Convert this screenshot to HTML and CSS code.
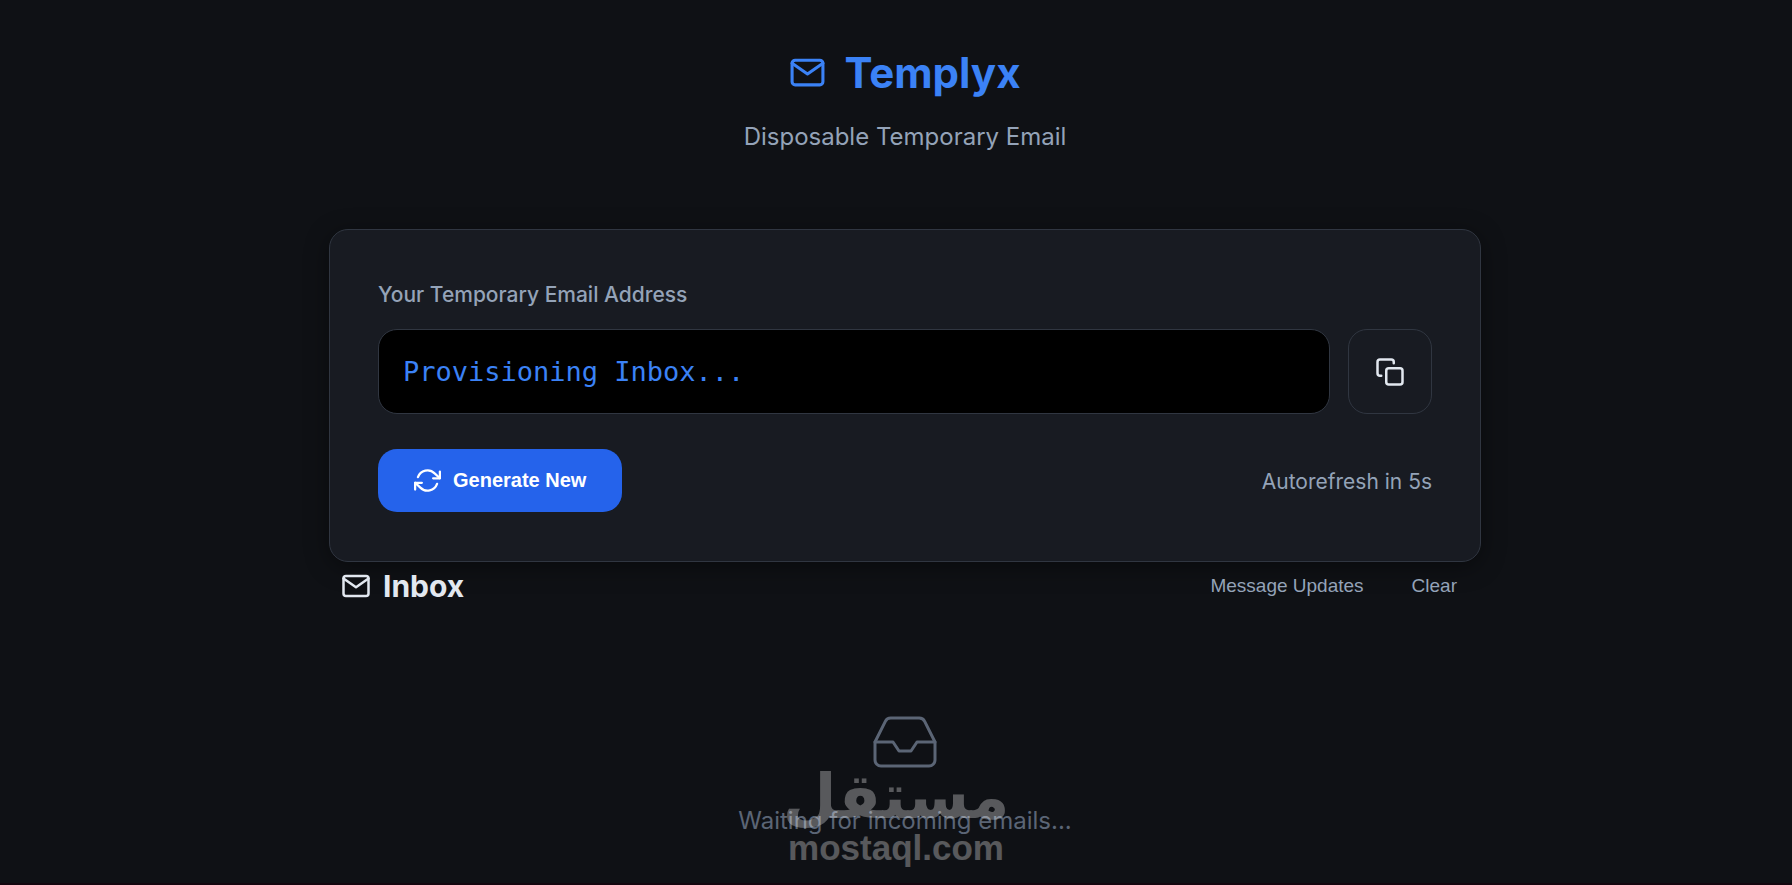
FILE: index.html
```html
<!DOCTYPE html>
<html lang="en">
<head>
<meta charset="utf-8">
<title>Templyx</title>
<link rel="stylesheet" href="styles.css">
</head>
<body>
<main class="page">
  <header class="brand">
    <h1 class="brand-name">
      <svg class="icon brand-icon" viewBox="0 0 24 24" aria-hidden="true"><rect x="2" y="4" width="20" height="16" rx="2"/><path d="M22 6l-10 7L2 6"/></svg>
      <span>Templyx</span>
    </h1>
    <p class="tagline">Disposable Temporary Email</p>
  </header>

  <section class="card">
    <label class="label" for="address">Your Temporary Email Address</label>
    <div class="address-row">
      <input class="address" id="address" type="text" value="Provisioning Inbox..." readonly>
      <button class="copy" type="button" aria-label="Copy address">
        <svg class="icon copy-icon" viewBox="0 0 24 24" aria-hidden="true"><rect x="9" y="9" width="13" height="13" rx="2"/><path d="M5 15H4a2 2 0 0 1-2-2V4a2 2 0 0 1 2-2h9a2 2 0 0 1 2 2v1"/></svg>
      </button>
    </div>
    <div class="actions">
      <button class="generate" type="button">
        <svg class="icon refresh-icon" viewBox="0 0 24 24" aria-hidden="true"><path d="M23 4v6h-6M1 20v-6h6"/><path d="M3.51 9a9 9 0 0 1 14.85-3.36L23 10M1 14l4.64 4.36A9 9 0 0 0 20.49 15"/></svg>
        <span>Generate New</span>
      </button>
      <span class="timer">Autorefresh in 5s</span>
    </div>
  </section>

  <section class="inbox">
    <div class="inbox-head">
      <h2 class="inbox-title">
        <svg class="icon inbox-icon" viewBox="0 0 24 24" aria-hidden="true"><rect x="2" y="4" width="20" height="16" rx="2"/><path d="M22 6l-10 7L2 6"/></svg>
        <span>Inbox</span>
      </h2>
      <div class="inbox-actions">
        <button class="text-button" type="button">Message Updates</button>
        <button class="text-button" type="button">Clear</button>
      </div>
    </div>
    <div class="empty">
      <svg class="icon empty-icon" viewBox="0 0 24 24" aria-hidden="true"><path d="M22 12h-6l-2 3h-4l-2-3H2"/><path d="M5.45 5.11L2 12v6a2 2 0 0 0 2 2h16a2 2 0 0 0 2-2v-6l-3.45-6.89A2 2 0 0 0 16.76 4H7.24a2 2 0 0 0-1.79 1.11z"/></svg>
      <p class="empty-text">Waiting for incoming emails...</p>
    </div>
  </section>
</main>
<div class="watermark">
  <span class="watermark-word" lang="ar" dir="rtl">مستقل</span>
  <span class="watermark-site">mostaql.com</span>
</div>
</body>
</html>
```

FILE: styles.css
```css
* {
  box-sizing: border-box;
}

body {
  margin: 0;
  min-height: 100vh;
  overflow: hidden;
  position: relative;
  background: #0f1115;
  color: #e2e8f0;
  font-family: Inter, "Liberation Sans", sans-serif;
  border-bottom: 2px solid #14060f;
}

h1, h2, p {
  margin: 0;
}

.page {
  max-width: 1170px;
  margin: 0 auto;
  padding: 43px 0 0 18px;
}

.icon {
  display: block;
  flex: none;
  fill: none;
  stroke: currentColor;
  stroke-width: 2;
  stroke-linecap: round;
  stroke-linejoin: round;
}

.brand {
  display: flex;
  flex-direction: column;
  align-items: center;
  gap: 18px;
  margin-bottom: 75px;
}

.brand-name {
  display: flex;
  align-items: center;
  gap: 18px;
  color: #3b82f6;
  font-size: 42px;
  line-height: 59px;
  font-weight: 700;
}

.brand-icon {
  width: 37px;
  height: 37px;
}

.tagline {
  color: #94a3b8;
  font-size: 24px;
  line-height: 34px;
}

.card {
  padding: 48px 48px 46px;
  border: 1px solid #303641;
  border-radius: 19px;
  background: #181b22;
  box-shadow: 0 5px 24px rgba(0, 0, 0, 0.4);
}

.label {
  display: block;
  margin-bottom: 17px;
  color: #94a3b8;
  font-size: 21px;
  line-height: 34px;
  font-weight: 500;
}

.address-row {
  display: flex;
  gap: 18px;
  margin-bottom: 35px;
}

.address {
  flex: 1;
  min-width: 0;
  height: 85px;
  padding: 0 24px;
  border: 1px solid #303641;
  border-radius: 19px;
  background: #000;
  color: #3b82f6;
  font-family: "DejaVu Sans Mono", monospace;
  font-size: 27px;
}

.copy {
  display: grid;
  place-items: center;
  width: 84px;
  padding: 0;
  border: 1px solid #303641;
  border-radius: 19px;
  background: none;
  color: #e2e8f0;
}

.copy-icon,
.inbox-icon {
  width: 30px;
  height: 30px;
}

.actions {
  display: flex;
  align-items: flex-start;
  justify-content: space-between;
}

.generate {
  display: flex;
  align-items: center;
  gap: 12px;
  height: 63px;
  padding: 0 36px;
  border: 0;
  border-radius: 19px;
  background: #2563eb;
  color: #fff;
  font-family: "Liberation Sans", Arial, sans-serif;
  font-size: 20px;
  font-weight: 700;
}

.refresh-icon {
  width: 27px;
  height: 27px;
}

.timer {
  color: #94a3b8;
  font-size: 21px;
  line-height: 66px;
}

.inbox-head {
  display: flex;
  align-items: center;
  justify-content: space-between;
  padding: 0 24px 0 12px;
}

.inbox-title {
  display: flex;
  align-items: center;
  gap: 12px;
  font-size: 30px;
  line-height: 48px;
  font-weight: 700;
}

.inbox-actions {
  display: flex;
  gap: 48px;
}

.text-button {
  padding: 0;
  border: 0;
  background: none;
  color: #94a3b8;
  font-family: "Liberation Sans", Arial, sans-serif;
  font-size: 19px;
}

.empty {
  display: flex;
  flex-direction: column;
  align-items: center;
  gap: 26px;
  padding-top: 96px;
  color: #5b6575;
}

.empty-icon {
  width: 72px;
  height: 72px;
  stroke-width: 1;
}

.empty-text {
  font-size: 24px;
  line-height: 34px;
}

.watermark {
  position: absolute;
  left: 50%;
  bottom: 14px;
  transform: translateX(-50%);
  display: flex;
  flex-direction: column;
  align-items: center;
  color: #fff;
  opacity: 0.3;
  font-weight: 700;
  pointer-events: none;
}

.watermark-word {
  font-family: "DejaVu Sans", sans-serif;
  font-size: 62px;
  line-height: 60px;
}

.watermark-site {
  font-family: "Liberation Sans", Arial, sans-serif;
  font-size: 35px;
  line-height: 42px;
}
```
